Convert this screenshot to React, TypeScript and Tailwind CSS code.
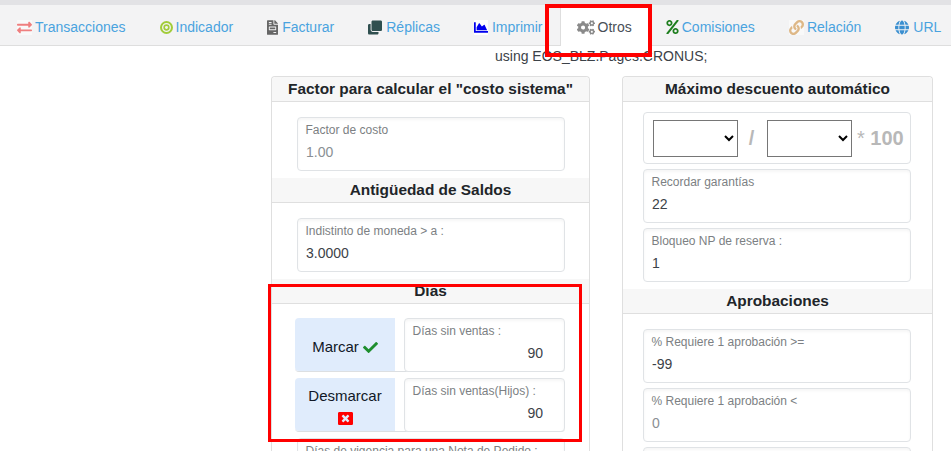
import React from "react";
import {
  FaExchangeAlt,
  FaFileInvoice,
  FaClone,
  FaChartArea,
  FaCogs,
  FaPercent,
  FaLink,
  FaGlobe,
  FaCheck,
  FaWindowClose,
} from "react-icons/fa";

function Rings({ size, color }: { size: number; color: string }) {
  return (
    <svg width={size} height={size} viewBox="0 0 14 14" fill="none">
      <circle cx="7" cy="7" r="5.9" stroke={color} strokeWidth="2.2" />
      <circle cx="7" cy="7" r="2.5" stroke={color} strokeWidth="1.8" />
    </svg>
  );
}

const navItems = [
  { label: "Transacciones", Icon: FaExchangeAlt, color: "#ef7f7f", box: "w-[15px] bg-[#f9f9f9]", gap: "gap-[3px]", size: 15 },
  { label: "Indicador", Icon: Rings, color: "#a2cc3a", box: "w-[13px]", gap: "gap-[3px]", size: 15 },
  { label: "Facturar", Icon: FaFileInvoice, color: "#666666", box: "w-[11px]", gap: "gap-[4px]", size: 15 },
  { label: "Réplicas", Icon: FaClone, color: "#2f4f4f", box: "w-[14px]", gap: "gap-[4px]", size: 15 },
  { label: "Imprimir", Icon: FaChartArea, color: "#0000ee", box: "w-[14px] bg-white", gap: "gap-[4px]", size: 15 },
  { label: "Otros", Icon: FaCogs, color: "#8a8a8a", box: "w-[18px]", gap: "gap-[3px]", size: 19, active: true },
  { label: "Comisiones", Icon: FaPercent, color: "#1e7e1e", box: "w-[13px]", gap: "gap-[3px]", size: 14 },
  { label: "Relación", Icon: FaLink, color: "#deb887", box: "w-[15px] bg-[#f9f9f9]", gap: "gap-[3px]", size: 15 },
  { label: "URL", Icon: FaGlobe, color: "#3a8fd0", box: "w-[14px]", gap: "gap-[4px]", size: 15 },
];

function NavBar() {
  return (
    <div className="flex h-[41px] border-b border-[#dedede] bg-[#f3f3f4] text-[14px]">
      {navItems.map(({ label, Icon, color, box, gap, size, active }) => (
        <div
          key={label}
          className={
            active
              ? `mt-[2px] flex h-[39px] items-center ${gap} border-x border-[#dedede] bg-white px-[16px] pt-[2px] text-[#495057]`
              : `flex h-[40px] items-center ${gap} border-x border-transparent px-[16px] pt-[4px] text-[#4aa3df]`
          }
        >
          <span className={`flex h-[15px] ${box} items-center justify-center`}>
            <Icon size={size} color={color} />
          </span>
          <span>{label}</span>
        </div>
      ))}
    </div>
  );
}

function Header({ children, first }: { children: React.ReactNode; first?: boolean }) {
  return (
    <div
      className={
        first
          ? "flex h-[25px] items-center justify-center rounded-t-[4px] border-b border-[#dfdfdf] bg-[#f7f7f7] text-[15.4px] font-bold text-[#212529]"
          : "flex h-[25px] items-center justify-center border-b border-[#dfdfdf] bg-[#f7f7f7] text-[15.4px] font-bold text-[#212529]"
      }
    >
      {children}
    </div>
  );
}

function Field({
  label,
  value,
  disabled,
  right,
  className = "",
}: {
  label?: string;
  value: string;
  disabled?: boolean;
  right?: boolean;
  className?: string;
}) {
  return (
    <div
      className={`h-[54px] rounded-[4px] border border-[#e0e3e6] bg-white shadow-[inset_0_2px_3px_rgba(0,0,0,0.04)] ${className}`}
    >
      <div className="h-[22px] truncate pl-[7.5px] pt-[5px] text-[12px] leading-[14px] text-[#7c7f83]">{label}</div>
      <input
        readOnly
        value={value}
        className={`h-[24px] w-full bg-transparent text-[14px] outline-none ${
          right ? "pr-[21px] text-right" : "pl-[8px]"
        } ${disabled ? "text-[#8a8f94]" : "text-[#3c4248]"}`}
      />
    </div>
  );
}

function MarkRow({
  label,
  fieldLabel,
  icon,
  stacked,
}: {
  label: string;
  fieldLabel: string;
  icon: React.ReactNode;
  stacked?: boolean;
}) {
  return (
    <div className="ml-[23px] mr-[24px] flex h-[54px] rounded-[4px] border-b border-[#dcdfe2] bg-white">
      <div
        className={`flex w-[100px] items-center justify-center rounded-l-[4px] bg-[#e0ecfc] text-[15px] text-[#111827] ${
          stacked ? "flex-col gap-[4px] pt-[2px]" : "gap-[4px] pt-[6px]"
        }`}
      >
        <span>{label}</span>
        {icon}
      </div>
      <Field
        label={fieldLabel}
        value="90"
        right
        className="ml-[9px] flex-1 border-[#d4d7da] shadow-[inset_-1px_1px_3px_rgba(0,0,0,0.2)]"
      />
    </div>
  );
}

export default function App() {
  const selectCls = "h-[37px] w-[85px] rounded-none border border-[#767676] bg-white text-[14px] text-black";
  return (
    <div className="relative h-[451px] w-[951px] overflow-hidden bg-white font-['Liberation_Sans',Arial,sans-serif]">
      <div className="h-[5px] bg-[#e2e2e5]" />
      <NavBar />
      <div className="h-[20px] pl-[495px] text-[14px] leading-[20px] text-[#3c4248]">using EOS_BLZ.Pages.CRONUS;</div>
      <div className="mt-[10px] ml-[271px] flex gap-[32px]">
        <section className="h-[420px] w-[319px] rounded-t-[4px] border-x border-t border-[#dfdfdf]">
          <Header first>Factor para calcular el "costo sistema"</Header>
          <div className="pl-[25px] pr-[24px] pb-[7px] pt-[15px]">
            <Field label="Factor de costo" value="1.00" disabled />
          </div>
          <Header>Antigüedad de Saldos</Header>
          <div className="pl-[25px] pr-[24px] pb-[7px] pt-[15px]">
            <Field label="Indistinto de moneda > a :" value="3.0000" />
          </div>
          <Header>Días</Header>
          <div className="flex flex-col gap-[6px] pt-[14px]">
            <MarkRow label="Marcar" fieldLabel="Días sin ventas :" icon={<FaCheck size={15} color="#1e8e2e" />} />
            <MarkRow
              label="Desmarcar"
              fieldLabel="Días sin ventas(Hijos) :"
              stacked
              icon={<FaWindowClose size={15} color="#ff0000" />}
            />
            <div className="pl-[25px] pr-[24px]">
              <Field label="Días de vigencia para una Nota de Pedido :" value="" />
            </div>
          </div>
        </section>
        <section className="h-[420px] w-[311px] rounded-t-[4px] border-x border-t border-[#dfdfdf]">
          <Header first>Máximo descuento automático</Header>
          <div className="flex flex-col gap-[5px] pl-[20px] pr-[21px] pb-[7px] pt-[10px]">
            <div className="flex h-[52px] items-center rounded-[4px] border border-[#dfe2e5] pl-[9px]">
              <select className={selectCls} />
              <span className="w-[29px] pr-[2px] text-center text-[20px] font-bold text-[#b8b8b8]">/</span>
              <select className={selectCls} />
              <span className="ml-[5px] whitespace-nowrap text-[20px] font-bold leading-none text-[#b8b8b8]">
                <span className="font-normal">*</span> 100
              </span>
            </div>
            <Field label="Recordar garantías" value="22" />
            <Field label="Bloqueo NP de reserva :" value="1" />
          </div>
          <Header>Aprobaciones</Header>
          <div className="flex flex-col gap-[5px] pl-[20px] pr-[21px] pt-[15px]">
            <Field label="% Requiere 1 aprobación >=" value="-99" />
            <Field label="% Requiere 1 aprobación <" value="0" disabled />
            <Field value="" />
          </div>
        </section>
      </div>
      <div className="absolute left-[545px] top-[4px] h-[53px] w-[107px] border-[4px] border-[#ff0000]" />
      <div className="absolute left-[268px] top-[284px] h-[158px] w-[314px] border-[3px] border-[#ff0000]" />
    </div>
  );
}
